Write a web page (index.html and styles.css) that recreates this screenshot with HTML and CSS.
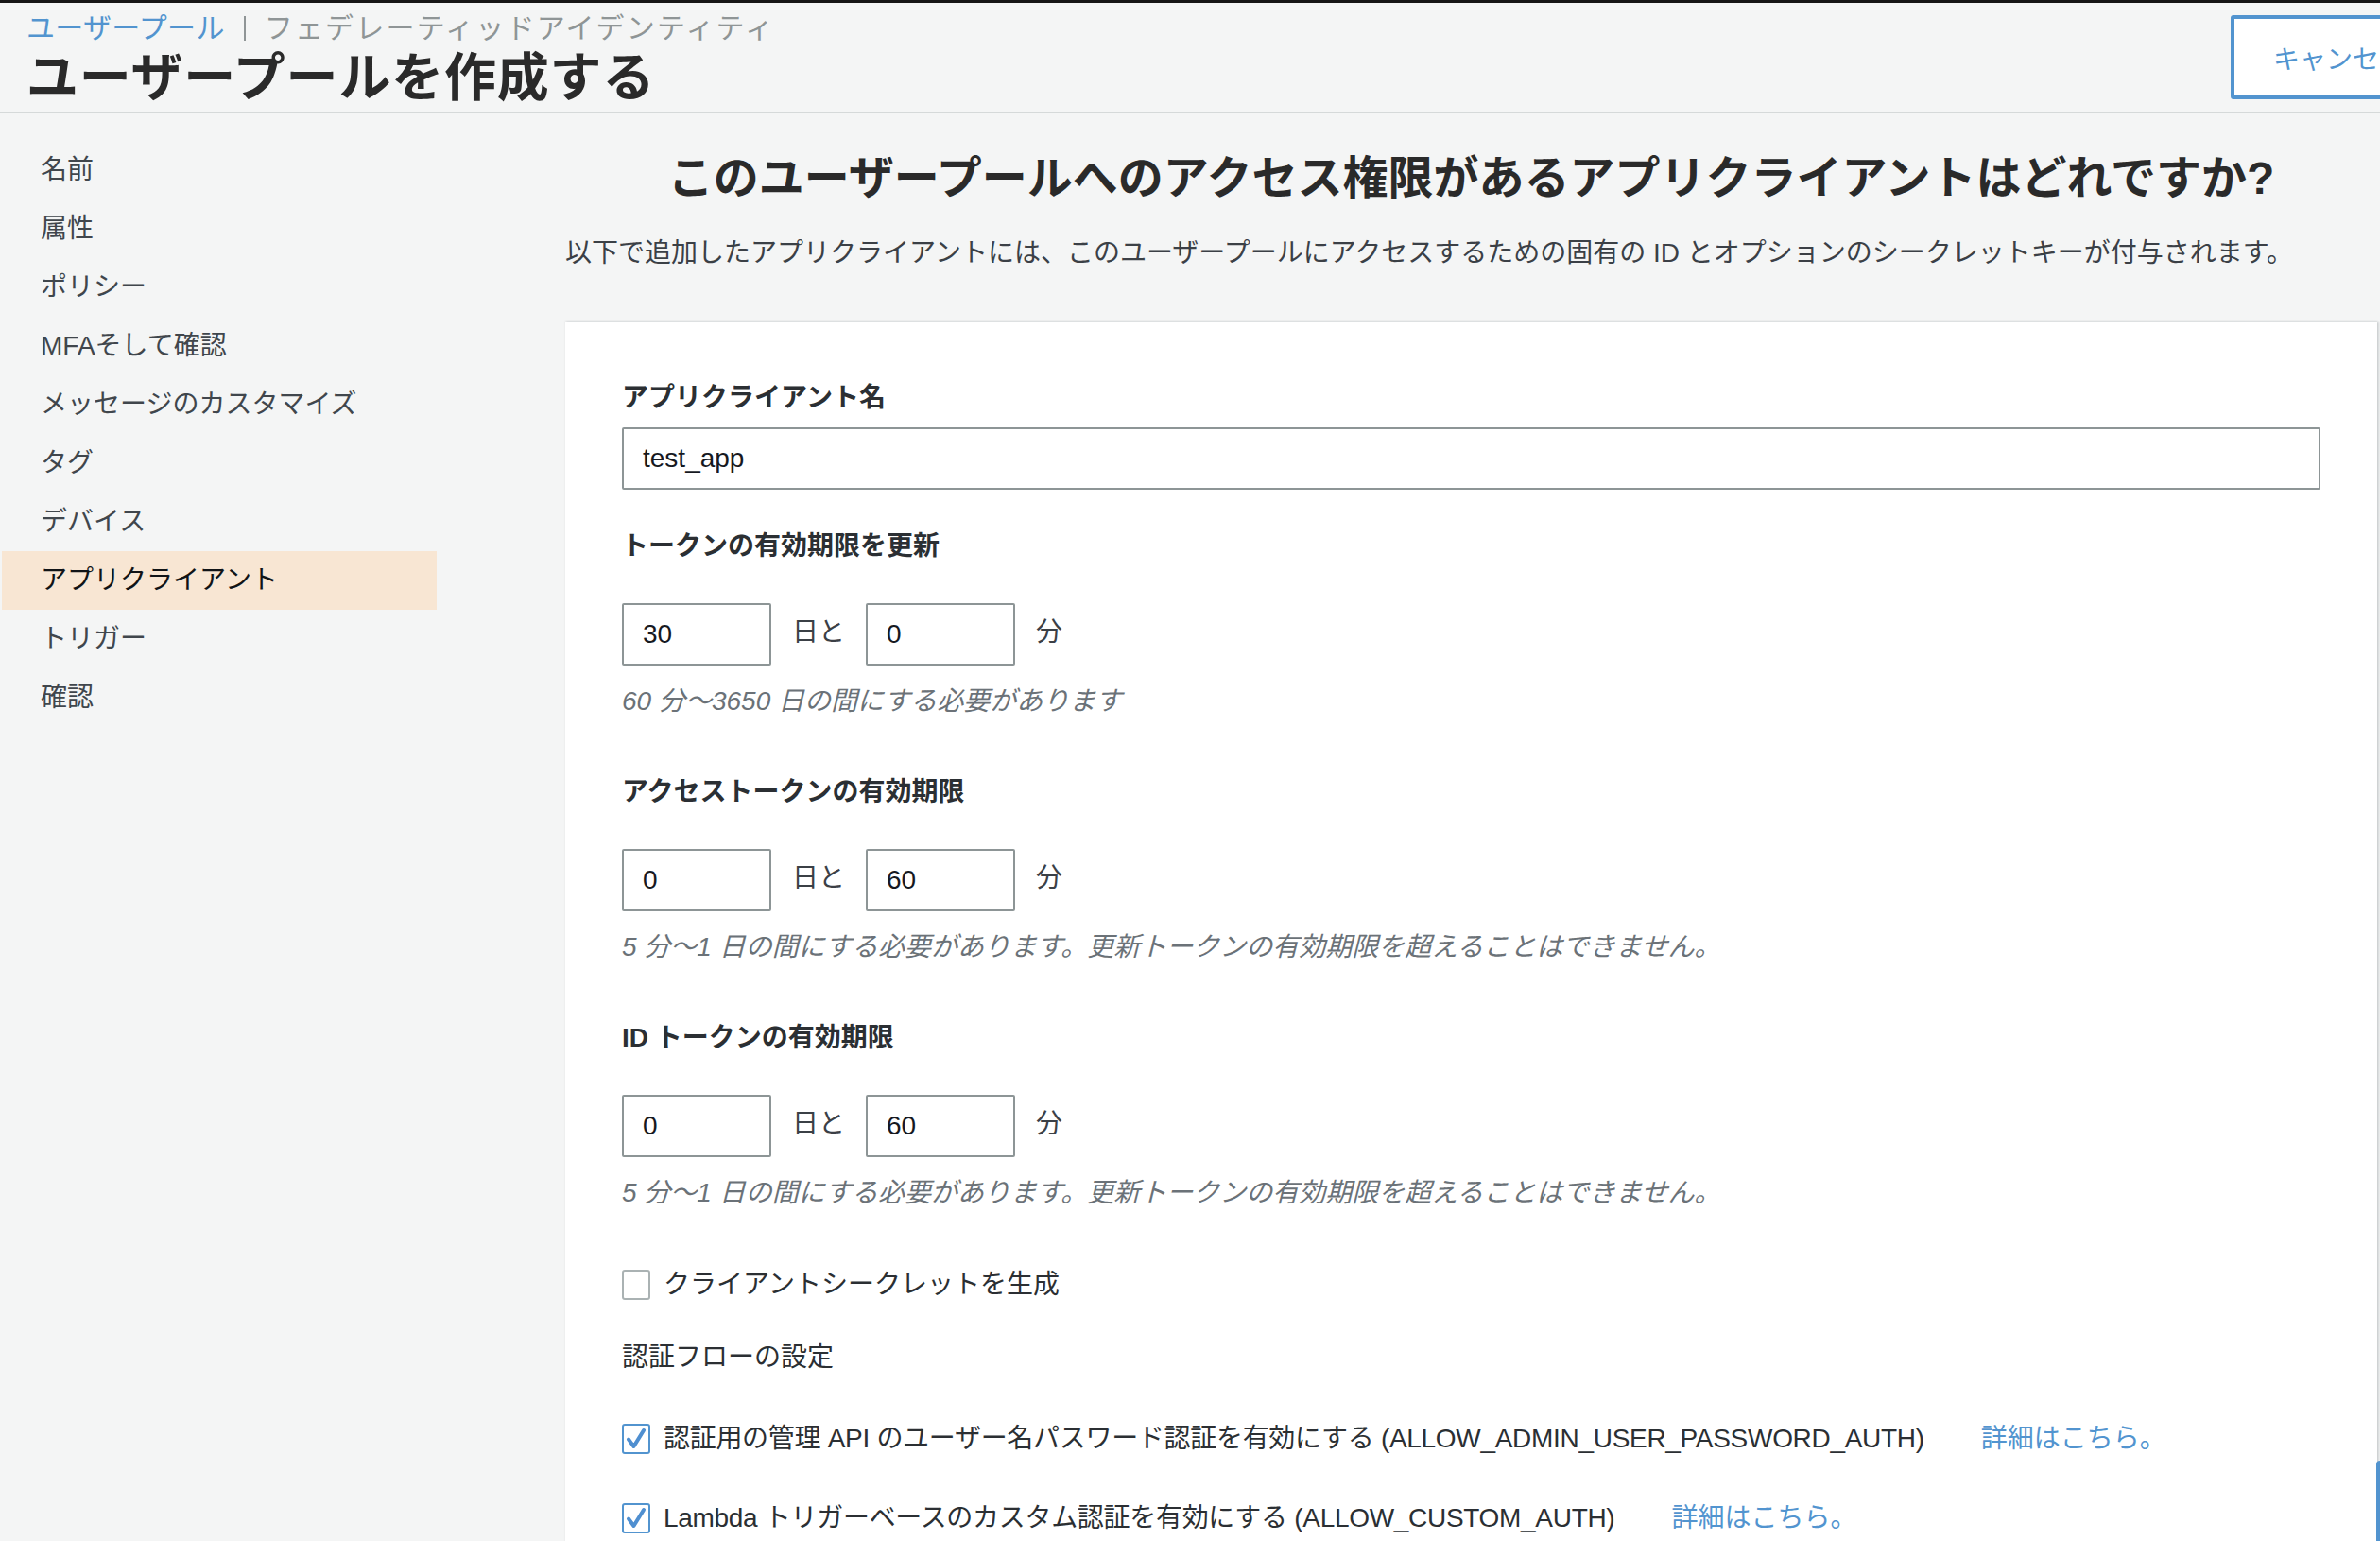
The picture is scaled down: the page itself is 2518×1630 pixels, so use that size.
FILE: index.html
```html
<!DOCTYPE html>
<html lang="ja">
<head>
<meta charset="utf-8">
<title>ユーザープールを作成する</title>
<link rel="stylesheet" href="styles.css">
</head>
<body>
<header class="topbar">
  <div class="topbar-main">
    <div class="crumbs">
      <span class="crumb-link">ユーザープール</span>
      <span class="crumb-bar"></span>
      <span class="crumb-other">フェデレーティッドアイデンティティ</span>
    </div>
    <h1 class="page-title">ユーザープールを作成する</h1>
  </div>
  <button class="cancel">キャンセル</button>
</header>

<div class="layout">
  <nav class="sidebar">
    <div class="nav-item">名前</div>
    <div class="nav-item">属性</div>
    <div class="nav-item">ポリシー</div>
    <div class="nav-item">MFAそして確認</div>
    <div class="nav-item">メッセージのカスタマイズ</div>
    <div class="nav-item">タグ</div>
    <div class="nav-item">デバイス</div>
    <div class="nav-item active">アプリクライアント</div>
    <div class="nav-item">トリガー</div>
    <div class="nav-item">確認</div>
  </nav>

  <main class="content">
    <h2 class="q-title">このユーザープールへのアクセス権限があるアプリクライアントはどれですか?</h2>
    <p class="q-desc">以下で追加したアプリクライアントには、このユーザープールにアクセスするための固有の ID とオプションのシークレットキーが付与されます。</p>

    <section class="card">
      <div class="label">アプリクライアント名</div>
      <div class="field field-wide">test_app</div>

      <div class="label label-gap">トークンの有効期限を更新</div>
      <div class="row">
        <div class="field field-num">30</div>
        <span class="unit">日と</span>
        <div class="field field-num">0</div>
        <span class="unit">分</span>
      </div>
      <div class="hint">60 分〜3650 日の間にする必要があります</div>

      <div class="label label-gap-lg">アクセストークンの有効期限</div>
      <div class="row">
        <div class="field field-num">0</div>
        <span class="unit">日と</span>
        <div class="field field-num">60</div>
        <span class="unit">分</span>
      </div>
      <div class="hint">5 分〜1 日の間にする必要があります。更新トークンの有効期限を超えることはできません。</div>

      <div class="label label-gap-lg">ID トークンの有効期限</div>
      <div class="row">
        <div class="field field-num">0</div>
        <span class="unit">日と</span>
        <div class="field field-num">60</div>
        <span class="unit">分</span>
      </div>
      <div class="hint">5 分〜1 日の間にする必要があります。更新トークンの有効期限を超えることはできません。</div>

      <div class="check-row secret">
        <span class="cb"></span>
        <span>クライアントシークレットを生成</span>
      </div>

      <div class="plain">認証フローの設定</div>

      <div class="check-row flow-1">
        <span class="cb checked"><svg viewBox="0 0 26 28" width="26" height="28"><path d="M5 14.5 L10.5 22 L21 5" fill="none" stroke="#4f8fd0" stroke-width="4" stroke-linecap="round" stroke-linejoin="round"/></svg></span>
        <span class="flow-text">認証用の管理 API のユーザー名パスワード認証を有効にする (ALLOW_ADMIN_USER_PASSWORD_AUTH)</span>
        <span class="more">詳細はこちら。</span>
      </div>

      <div class="check-row flow-2">
        <span class="cb checked"><svg viewBox="0 0 26 28" width="26" height="28"><path d="M5 14.5 L10.5 22 L21 5" fill="none" stroke="#4f8fd0" stroke-width="4" stroke-linecap="round" stroke-linejoin="round"/></svg></span>
        <span class="flow-text">Lambda トリガーベースのカスタム認証を有効にする (ALLOW_CUSTOM_AUTH)</span>
        <span class="more">詳細はこちら。</span>
      </div>
    </section>
  </main>
</div>
<div class="edge-tab"></div>
</body>
</html>
```

FILE: styles.css
```css
html, body {
  margin: 0;
  height: 1630px;
  overflow: hidden;
}

body {
  box-sizing: border-box;
  border-top: 3px solid #161616;
  background: #f4f5f5;
  font-family: "Liberation Sans", "Noto Sans CJK JP", sans-serif;
  color: #2b2f33;
  position: relative;
}

/* ---------- header ---------- */
.topbar {
  display: flex;
  align-items: flex-start;
  box-sizing: border-box;
  height: 117px;
  padding: 9px 0 0 28px;
  border-bottom: 2px solid #d5d9d9;
}

.topbar-main {
  flex: 1;
  min-width: 0;
}

.crumbs {
  display: flex;
  align-items: center;
  font-size: 30px;
  line-height: 36px;
  white-space: nowrap;
}

.crumb-link {
  color: #5294cf;
  letter-spacing: 0.3px;
}

.crumb-bar {
  width: 2px;
  height: 26px;
  margin: 0 20px;
  background: #8f9596;
}

.crumb-other {
  color: #8f9596;
  letter-spacing: 2.2px;
}

.page-title {
  margin: 4px 0 0;
  font-size: 55px;
  line-height: 60px;
  font-weight: 700;
  letter-spacing: 0.8px;
  color: #2a2a2a;
  white-space: nowrap;
}

.cancel {
  flex: none;
  box-sizing: border-box;
  width: 248px;
  height: 89px;
  margin: 4px -90px 0 0;
  padding: 0 0 0 41px;
  border: 4px solid #5294cf;
  border-radius: 3px;
  background: #fff;
  color: #5294cf;
  font-family: "Liberation Sans", "Noto Sans CJK JP", sans-serif;
  font-size: 28px;
  text-align: left;
  white-space: nowrap;
}

/* ---------- layout ---------- */
.layout {
  display: flex;
}

.sidebar {
  flex: none;
  width: 460px;
  margin-left: 2px;
  padding-top: 29px;
}

.nav-item {
  height: 62px;
  line-height: 62px;
  padding-left: 41px;
  font-size: 28px;
  color: #40464c;
  white-space: nowrap;
}

.nav-item.active {
  background: #f8e6d3;
  color: #111417;
}

.content {
  flex: 1;
  min-width: 0;
  margin-left: 136px;
  padding: 39px 3px 0 0;
}

.q-title {
  margin: 0;
  text-align: center;
  font-size: 48px;
  line-height: 60px;
  font-weight: 700;
  color: #2a2a2a;
  white-space: nowrap;
}

.q-desc {
  margin: 29px 0 0;
  font-size: 28px;
  line-height: 40px;
  color: #3b4046;
  white-space: nowrap;
}

/* ---------- card ---------- */
.card {
  margin-top: 53px;
  padding: 60px 60px 80px;
  background: #fff;
  box-shadow: 0 -1px 2px rgba(0, 28, 36, 0.08), 2px 0 2px rgba(0, 28, 36, 0.14);
}

.label {
  font-size: 28px;
  line-height: 40px;
  font-weight: 700;
  color: #2b2f33;
}

.label-gap {
  margin-top: 40px;
}

.label-gap-lg {
  margin-top: 56px;
}

.field {
  box-sizing: border-box;
  height: 66px;
  border: 2px solid #8d9596;
  border-radius: 2px;
  padding-left: 20px;
  font-size: 28px;
  line-height: 62px;
  color: #16191f;
  background: #fff;
}

.field-wide {
  margin-top: 11px;
}

.field-num {
  width: 158px;
}

.row {
  display: flex;
  align-items: center;
  gap: 22px;
  margin-top: 40px;
}

.unit {
  font-size: 28px;
  line-height: 36px;
  padding-bottom: 4px;
  color: #3b4046;
}

.hint {
  margin-top: 18px;
  font-size: 28px;
  line-height: 40px;
  font-style: italic;
  color: #6b7278;
  white-space: nowrap;
}

.check-row {
  display: flex;
  align-items: center;
  gap: 14px;
  font-size: 28px;
  line-height: 40px;
  color: #2b2f33;
  white-space: nowrap;
}

.flow-text {
  letter-spacing: -0.3px;
}

.secret {
  margin-top: 57px;
}

.flow-1 {
  margin-top: 46px;
}

.flow-2 {
  margin-top: 44px;
}

.cb {
  flex: none;
  box-sizing: border-box;
  width: 30px;
  height: 32px;
  border: 2px solid #aab2b3;
  border-radius: 3px;
  background: #fff;
  display: flex;
  align-items: center;
  justify-content: center;
}

.cb.checked {
  border-color: #5294cf;
}

.cb svg {
  display: block;
}

.plain {
  margin-top: 37px;
  font-size: 28px;
  line-height: 40px;
  color: #2b2f33;
}

.more {
  margin-left: 46px;
  color: #5294cf;
}

.edge-tab {
  position: absolute;
  right: 0;
  top: 1542px;
  width: 4px;
  height: 88px;
  background: #5294cf;
  border-radius: 4px 0 0 4px;
}
```
